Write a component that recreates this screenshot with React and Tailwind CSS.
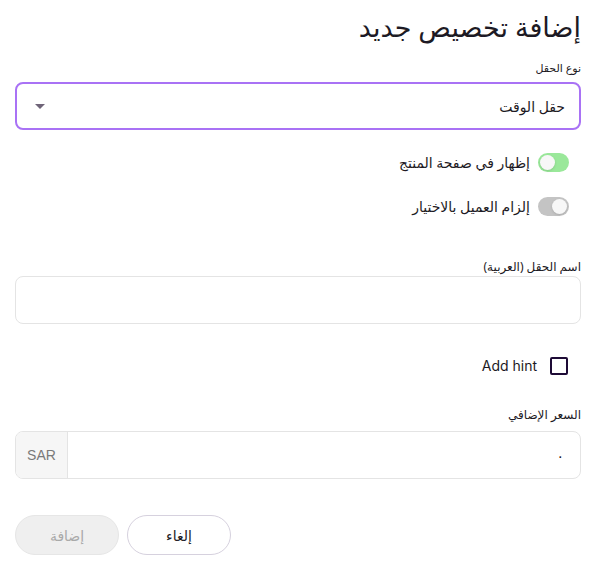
import React, { useState } from "react";

function Toggle({ on }) {
  return (
    <span
      className={`relative inline-flex h-[19px] w-[31px] shrink-0 items-center rounded-full ${
        on ? "bg-[#9ae89a]" : "bg-[#c4c4c4]"
      }`}
    >
      <span
        className={`absolute top-[2px] h-[15px] w-[15px] rounded-full bg-[#f7f7f7] shadow-sm ${
          on ? "left-[2px]" : "right-[2px]"
        }`}
      ></span>
    </span>
  );
}

export default function App() {
  const [price, setPrice] = useState("٠");

  return (
    <div
      dir="rtl"
      className="w-[591px] h-[565px] bg-white pl-[15px] pr-[10px] text-[#1d1a24]"
      style={{ fontFamily: '"Noto Sans", "DejaVu Sans", sans-serif' }}
    >
      {/* title */}
      <h1 className="pt-[6px] text-[27px] leading-[42px] font-normal">إضافة تخصيص جديد</h1>

      {/* field type */}
      <label className="mt-[12px] block text-[11px] leading-[16px]">نوع الحقل</label>
      <div className="mt-[6px] flex h-[48px] items-center justify-between rounded-[8px] border-2 border-[#a972f5] pr-[14px] pl-[18px]">
        <span className="text-[14px]">حقل الوقت</span>
        <span className="h-0 w-0 border-x-[5px] border-t-[5px] border-x-transparent border-t-[#6f6478]"></span>
      </div>

      {/* toggles */}
      <div className="mt-[23px] flex flex-col gap-[25px] pr-[12px]">
        <div className="flex items-center gap-[8px]">
          <Toggle on />
          <span className="text-[14px] leading-[19px]">إظهار في صفحة المنتج</span>
        </div>
        <div className="flex items-center gap-[8px]">
          <Toggle />
          <span className="text-[14px] leading-[19px]">إلزام العميل بالاختيار</span>
        </div>
      </div>

      {/* arabic name */}
      <label className="mt-[43px] block text-[12px] leading-[16px]">اسم الحقل (العربية)</label>
      <input
        className="mt-[1px] block h-[48px] w-full rounded-[8px] border border-[#e4e4e4] px-[14px] text-[14px] outline-none"
        type="text"
      />

      {/* add hint */}
      <div className="mt-[33px] flex items-center gap-[13px] pr-[13px]">
        <span className="h-[18px] w-[18px] rounded-[2px] border-2 border-[#1e0b36]"></span>
        <span className="text-[14px] leading-[18px]" dir="ltr" style={{ fontFamily: "Inter, sans-serif" }}>
          Add hint
        </span>
      </div>

      {/* price */}
      <label className="mt-[32px] block text-[12px] leading-[16px]">السعر الإضافي</label>
      <div className="mt-[8px] flex h-[48px] overflow-hidden rounded-[8px] border border-[#e4e4e4]">
        <input
          className="min-w-0 flex-1 px-[16px] text-[14px] outline-none"
          type="text"
          value={price}
          onChange={(e) => setPrice(e.target.value)}
        />
        <span
          className="flex w-[52px] items-center justify-center border-r border-[#e4e4e4] bg-[#f6f6f6] text-[14px] text-[#7a7a7a]"
          style={{ fontFamily: '"Liberation Sans", sans-serif' }}
        >
          SAR
        </span>
      </div>

      {/* buttons */}
      <div className="mt-[36px] flex justify-end gap-[8px]">
        <button className="h-[40px] w-[104px] rounded-full border border-[#d6d1de] bg-white text-[14px]">إلغاء</button>
        <button disabled className="h-[40px] w-[104px] rounded-full border border-[#e6e6e6] bg-[#efefef] text-[14px] text-[#a9a9a9]">
          إضافة
        </button>
      </div>
    </div>
  );
}
